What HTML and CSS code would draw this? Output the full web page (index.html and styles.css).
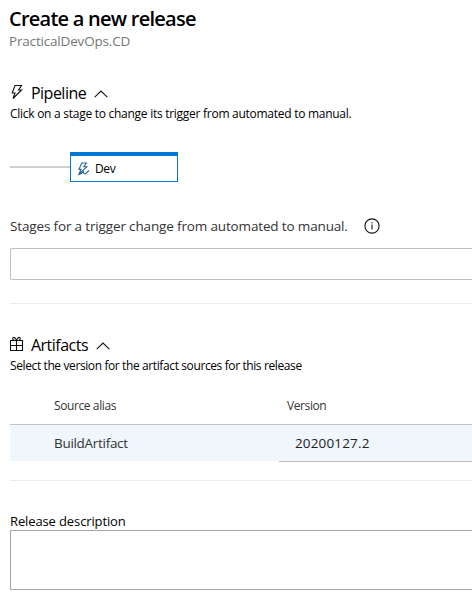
FILE: index.html
```html
<!DOCTYPE html>
<html lang="en">
<head>
<meta charset="utf-8">
<title>Create a new release</title>
<link rel="stylesheet" href="styles.css">
</head>
<body>
<main class="panel">
  <h1 class="title"><span>Create a new release</span></h1>
  <p class="subtitle"><span>PracticalDevOps.CD</span></p>

  <section class="pipeline">
    <h2 class="heading">
      <svg class="heading-icon" width="14" height="16" viewBox="0 0 14 16"><path d="M5 1.5H11.5L8.5 6H11.5L3 14.5L5 9H2.2Z"/></svg>
      <span class="pipeline-name">Pipeline</span>
      <svg class="chevron" width="14" height="8" viewBox="0 0 14 8"><path d="M.7 7.2L7 1L13.3 7.2"/></svg>
    </h2>
    <p class="hint"><span class="hint-pipeline">Click on a stage to change its trigger from automated to manual.</span></p>
    <div class="diagram">
      <div class="connector"></div>
      <div class="stage">
        <svg width="13" height="14" viewBox="0 0 13 14"><path d="M4.7 1H9.5L6.8 4.8H9.8L2 12L4 7.4H2ZM1 12.6Q4 12 6.5 9.8Q6.5 12.6 8.7 11.5L12 8.5"/></svg>
        <span>Dev</span>
      </div>
    </div>
    <div class="field-label">
      <span class="stages-label">Stages for a trigger change from automated to manual.</span>
      <svg class="info" width="16" height="16" viewBox="0 0 16 16"><circle cx="8" cy="8" r="7.1"/><path d="M8 6.5V11.5M8 4.2V5.5"/></svg>
    </div>
    <div class="picker"></div>
  </section>

  <section class="artifacts">
    <h2 class="heading">
      <svg class="heading-icon" width="14" height="16" viewBox="0 0 14 16"><path d="M.5 4.5H12.5V14.5H.5ZM.5 9.5H12.5M6.5 4.5V14.5M6.5 4L4.8 1.8Q3 .8 2.7 2.4Q2.7 3.7 4 4M6.5 4L8.2 1.8Q10 .8 10.3 2.4Q10.3 3.7 9 4"/></svg>
      <span class="artifacts-name">Artifacts</span>
      <svg class="chevron" width="14" height="8" viewBox="0 0 14 8"><path d="M.7 7.2L7 1L13.3 7.2"/></svg>
    </h2>
    <p class="hint"><span class="hint-artifacts">Select the version for the artifact sources for this release</span></p>
    <div class="grid head">
      <div class="alias"><span>Source alias</span></div>
      <div class="version"><span>Version</span></div>
    </div>
    <div class="grid row">
      <div class="alias"><span>BuildArtifact</span></div>
      <div class="version"><span>20200127.2</span></div>
    </div>
  </section>

  <section class="description">
    <div class="description-label"><span>Release description</span></div>
    <div class="textbox"></div>
  </section>
</main>
</body>
</html>
```
FILE: styles.css
```css
* { box-sizing: border-box; }
body {
  margin: 0;
  background: #fff;
  color: #000;
  font-family: "Open Sans", "Noto Sans", sans-serif;
  overflow: hidden;
}
h1, h2, p { margin: 0; font-weight: 400; }
svg { display: block; flex: none; fill: none; stroke: #111; stroke-width: 1.1; }
.panel { padding: 5px 0 0 10px; white-space: nowrap; }
.title { font-size: 20px; line-height: 28px; font-weight: 600; letter-spacing: -0.75px; margin-left: -1px; }
.subtitle { font-size: 13.5px; line-height: 20px; margin: -2px 0 0 -1px; color: #767676; letter-spacing: -0.18px; }
.pipeline { padding-top: 31px; }
.heading { display: flex; align-items: center; height: 22px; font-size: 16px; line-height: 22px; }
.heading-icon { margin: -2px 7px 0 0; }
.chevron { margin: 2px 0 0 8px; }
.pipeline-name, .artifacts-name { letter-spacing: -0.52px; }
.hint { font-size: 12px; line-height: 16px; margin-top: 2px; }
.hint-pipeline { letter-spacing: -0.27px; }
.hint-artifacts { letter-spacing: -0.39px; }
.diagram { display: flex; align-items: center; height: 30px; margin-top: 30px; }
.connector { width: 60px; height: 2px; background: #d0d0d0; }
.stage {
  display: flex;
  align-items: center;
  gap: 5px;
  width: 108px;
  height: 30px;
  padding-left: 6px;
  border: 1px solid #0078d4;
  border-top-width: 4px;
  font-size: 12px;
  line-height: 16px;
  letter-spacing: -0.4px;
}
.stage svg { stroke: #29629b; }
.field-label { display: flex; align-items: center; height: 20px; margin-top: 34px; font-size: 13.5px; line-height: 20px; color: #333; }
.stages-label { width: 338px; letter-spacing: -0.15px; }
.info { margin-left: 16px; }
.picker { height: 32px; margin-top: 12px; border: 1px solid #c0c0c0; border-right: 0; border-radius: 2px 0 0 2px; }
.artifacts { margin-top: 23px; padding-top: 30px; border-top: 1px solid #eaeaea; }
.grid { display: grid; grid-template-columns: 269px 1fr; color: #333; }
.alias { padding-left: 44px; }
.head { height: 51px; padding-top: 24px; font-size: 12px; line-height: 16px; letter-spacing: -0.4px; border-bottom: 1px solid #c4c4c4; }
.head .version { padding-left: 8px; }
.row { height: 36px; font-size: 13.5px; line-height: 36px; background: #eff6fc; }
.row .alias { letter-spacing: -0.3px; }
.row .version { padding-left: 16px; letter-spacing: 0.15px; border-bottom: 1px solid #c0c0c0; color: #222; }
.description { margin-top: 19px; padding-top: 32px; border-top: 1px solid #eaeaea; }
.description-label { font-size: 13px; line-height: 17px; letter-spacing: -0.12px; }
.textbox { height: 60px; border: 1px solid #a6a6a6; border-right: 0; }
```
